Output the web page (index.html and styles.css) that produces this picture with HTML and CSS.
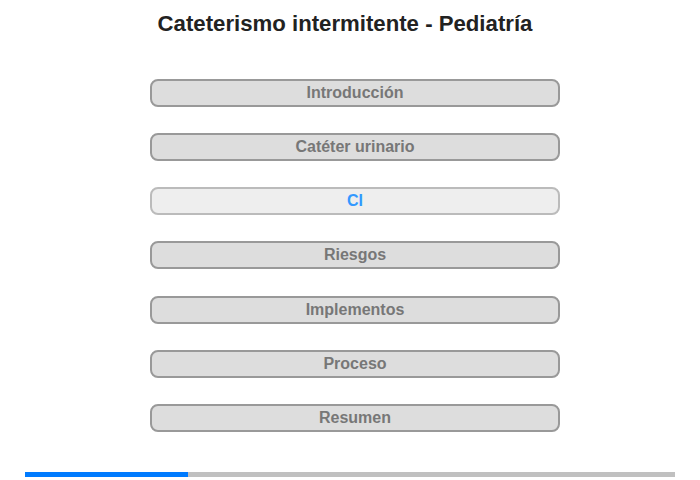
FILE: index.html
```html
<!DOCTYPE html>
<html lang="es">
<head>
<meta charset="utf-8">
<title>Cateterismo intermitente - Pediatría</title>
<link rel="stylesheet" href="styles.css">
</head>
<body>
<div class="page">
  <h1 class="title">Cateterismo intermitente - Pediatría</h1>
  <nav class="menu">
    <button class="item">Introducción</button>
    <button class="item">Catéter urinario</button>
    <button class="item active">CI</button>
    <button class="item">Riesgos</button>
    <button class="item">Implementos</button>
    <button class="item">Proceso</button>
    <button class="item">Resumen</button>
  </nav>
  <div class="progress"><div class="progress-fill" style="width:25%"></div></div>
</div>
</body>
</html>
```
FILE: styles.css
```css
html, body {
  margin: 0;
  padding: 0;
  background: #fff;
  font-family: "Liberation Sans", Arial, sans-serif;
}
.page {
  width: 700px;
  height: 480px;
  display: flex;
  flex-direction: column;
}
.title {
  margin: 11px 0 0 0;
  padding-right: 10px;
  text-align: center;
  font-size: 22.2px;
  line-height: 25px;
  font-weight: bold;
  color: #222;
}
.menu {
  display: flex;
  flex-direction: column;
  gap: 26.17px;
  margin: 43px 0 0 150px;
  width: 410px;
}
.item {
  box-sizing: border-box;
  height: 28px;
  width: 410px;
  margin: 0;
  padding: 0;
  border: 2px solid #999;
  border-radius: 8px;
  background: #ddd;
  color: #777;
  font-family: "Liberation Sans", Arial, sans-serif;
  font-size: 16px;
  font-weight: bold;
  text-align: center;
  line-height: 24px;
}
.item.active {
  background: #eee;
  border-color: #bbb;
  color: #3399ff;
}
.progress {
  margin: 40px 25px 0 25px;
  height: 5px;
  background: #c0c0c0;
}
.progress-fill {
  height: 100%;
  background: #007bff;
}
```
